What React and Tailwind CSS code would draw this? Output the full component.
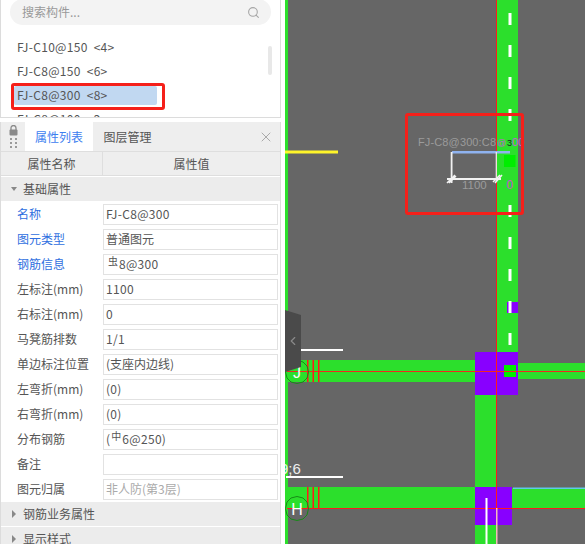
import React from "react";
import { ChevronLeft, Search, X } from "lucide-react";

const font = { fontFamily: '"Noto Sans CJK SC", "Liberation Sans", sans-serif' };

const rows = [
  ["名称", "FJ-C8@300", true, "latin"],
  ["图元类型", "普通图元", true],
  ["钢筋信息", "8@300", true, "rebar"],
  ["左标注(mm)", "1100", false, "latin"],
  ["右标注(mm)", "0", false, "latin"],
  ["马凳筋排数", "1/1", false, "latin"],
  ["单边标注位置", "(支座内边线)"],
  ["左弯折(mm)", "(0)", false, "latin"],
  ["右弯折(mm)", "(0)", false, "latin"],
  ["分布钢筋", "6@250)", false, "dist"],
  ["备注", ""],
  ["图元归属", "非人防(第3层)", false, "muted"],
];

function Row({ name, value, blue, kind }) {
  return (
    <div className="flex h-[25px] shrink-0 items-center">
      <div className={`w-[102px] pb-[2px] pl-[16px] text-[12px] ${blue ? "text-[#2f6fe0]" : "text-[#555]"}`}>{name}</div>
      <div className={`flex h-[21px] w-[175px] items-center border border-[#e2e2e2] bg-white pb-[2px] pl-[2px] text-[12px] ${kind === "muted" ? "text-[#aaa]" : "text-[#555]"}`}>
        {kind === "rebar" && (
          <span className="relative -top-[3px] ml-[2px] mr-[1px] text-[10px] leading-none">虫</span>
        )}
        {kind === "dist" && (
          <>
            <span className="tracking-[0.3px]">(</span>
            <span className="relative -top-[3px] mx-[1px] text-[10px] leading-none">中</span>
          </>
        )}
        {kind === "latin" || kind === "rebar" || kind === "dist" ? (
          <span className="tracking-[0.3px]">{value}</span>
        ) : value}
      </div>
    </div>
  );
}

function Group({ open, label }) {
  return (
    <div className="flex h-[24px] shrink-0 items-center bg-[#ececec]">
      <span className="flex w-[22px] shrink-0 pl-[10px]">
        <span className={`h-0 w-0 ${open
          ? "border-x-[3px] border-t-[4px] border-x-transparent border-t-[#888]"
          : "ml-[1px] border-y-[4px] border-l-[4px] border-y-transparent border-l-[#888]"}`} />
      </span>
      <span className="text-[12px] text-[#555]">{label}</span>
    </div>
  );
}

function Canvas() {
  const dashes = [13, 45, 77, 109, 205, 237, 269, 301, 333];
  const latin = "Liberation Sans";
  return (
    <svg className="h-full w-full" viewBox="285 0 300 544" xmlns="http://www.w3.org/2000/svg">
      <rect x="285" y="0" width="300" height="544" fill="#666666" />
      {/* Left green edge */}
      <rect x="285" y="0" width="3" height="544" fill="#2cdf2c" />
      {/* Vertical beam */}
      <rect x="497" y="0" width="21" height="352" fill="#2cdf2c" />
      <rect x="475" y="395" width="21" height="92" fill="#2cdf2c" />
      <rect x="475" y="525" width="21" height="19" fill="#2cdf2c" />
      {/* Horizontal beams */}
      <rect x="287" y="360" width="188" height="22" fill="#2cdf2c" />
      <rect x="518" y="363" width="67" height="16" fill="#2cdf2c" />
      <rect x="287" y="487" width="188" height="22" fill="#2cdf2c" />
      <rect x="512" y="488" width="73" height="21" fill="#2cdf2c" />
      <rect x="513" y="487.5" width="72" height="1.5" fill="#5fc8e8" />
      {/* Columns */}
      <rect x="475" y="352" width="43" height="43" fill="#8800ff" />
      <rect x="475" y="487" width="37" height="38" fill="#8800ff" />
      <rect x="507" y="302" width="11" height="11" fill="#8800ff" />
      <rect x="504" y="365" width="12" height="12" fill="#00ee00" />
      {/* Dashes */}
      {dashes.map((y) => (
        <rect key={y} x="508.5" y={y} width="3" height="12" fill="#ffffff" />
      ))}
      {/* Red axes */}
      <rect x="496" y="0" width="1" height="544" fill="#ff1a1a" />
      <rect x="287" y="371" width="298" height="1" fill="#f02a1e" />
      <rect x="287" y="508" width="298" height="1" fill="#ff1a1a" />
      {[307, 312.5, 318].map((x) => (
        <rect key={x} x={x} y="360" width="1.5" height="22" fill="#ff1a1a" />
      ))}
      {[307, 312.5, 318].map((x) => (
        <rect key={x} x={x} y="487" width="1.5" height="21" fill="#ff1a1a" />
      ))}
      {/* Yellow and white lines */}
      <rect x="285" y="150.5" width="53" height="3" fill="#fff52a" />
      <rect x="286" y="349" width="57" height="2" fill="#ffffff" />
      <rect x="286" y="476" width="57" height="2" fill="#ffffff" />
      <rect x="485.5" y="498" width="2" height="46" fill="#ffffff" />
      <rect x="496" y="508" width="1.5" height="36" fill="#f4b9b9" />
      {/* Axis bubbles */}
      <polygon points="297,360 303,362 307,366 308.5,372 307,378 303,382 297,383.5 291,382 287,378 285.5,372 287,366 291,362" fill="none" stroke="#178a17" />
      <text x="297" y="378" fill="#fff" fontSize="16" textAnchor="middle" fontFamily={latin}>J</text>
      <polygon points="297,496.5 303,498 307,502 308.5,508.5 307,515 303,519 297,520.5 291,519 287,515 285.5,508.5 287,502 291,498" fill="none" stroke="#178a17" />
      <text x="297" y="515" fill="#fff" fontSize="16" textAnchor="middle" fontFamily={latin}>H</text>
      <text x="280" y="474" fill="#eee" fontSize="15" fontFamily={latin}>9;6</text>
      {/* Annotation */}
      <text x="418" y="146" fill="#9b9b9b" fontSize="11" textLength="78" fontFamily={latin}>FJ-C8@300:C8</text>
      <text x="497" y="146" fill="#c858d8" fontSize="9" fontFamily={latin}>@</text>
      <text x="507" y="146" fill="#222" fontSize="9" fontFamily={latin}>3</text>
      <text x="512" y="146" fill="#c858d8" fontSize="11" fontFamily={latin}>00</text>
      <rect x="452" y="151" width="58" height="2.5" fill="#8fb3f0" />
      <rect x="450.7" y="152" width="1.8" height="31" fill="#f2f2f2" />
      <rect x="495.7" y="152" width="1.2" height="30" fill="#f2f2f2" />
      <rect x="447" y="178" width="54" height="2" fill="#f2f2f2" />
      <path d="M447 183 L455 175 M449 183 L456 176 M495 183 L502 175 M493 182 L500 175" stroke="#f2f2f2" strokeWidth="1.5" />
      <rect x="504" y="155" width="11.5" height="12" fill="#00ee00" />
      <text x="462" y="189" fill="#9b9b9b" fontSize="11.5" fontFamily={latin}>1100</text>
      <text x="506.5" y="189" fill="#d050d0" fontSize="12" fontFamily={latin}>0</text>
    </svg>
  );
}

export default function App() {
  return (
    <div className="flex h-[544px] w-[585px] overflow-hidden bg-white" style={font}>
      <div className="flex w-[281px] shrink-0 flex-col bg-white">
        <div className="flex h-[118px] shrink-0 flex-col overflow-hidden border-b border-r border-l border-[#dcdcdc] pl-[9px] pr-[9px]">
          <div className="mt-[-1px] flex h-[26px] w-[261px] shrink-0 items-center justify-between rounded-full bg-[#f3f3f3] pl-[12px] pr-[11px]">
            <span className="text-[12px] text-[#999]">搜索构件...</span>
            <Search size={13} className="text-[#a5a5a5]" />
          </div>
          <div className="relative mt-[10px] flex flex-col">
            <div className="absolute right-[-1px] top-[11px] h-[29px] w-[4px] rounded-full bg-[#e8e8e8]" />
            {["FJ-C10@150  <4>", "FJ-C8@150  <6>"].map((t) => (
              <div key={t} className="flex h-[24px] items-center whitespace-pre pb-[1px] pl-[7px] text-[12px] tracking-[0.3px] text-[#555]">{t}</div>
            ))}
            <div className="relative flex h-[24px] items-center whitespace-pre pb-[1px] pl-[7px] text-[12px] tracking-[0.3px] text-[#555]">
              <div className="absolute left-[4px] top-[3px] h-[19px] w-[143px] rounded-[2px] bg-[#c1d8f1]" />
              <span className="relative">FJ-C8@300  &lt;8&gt;</span>
              <div className="absolute left-[1px] top-0 h-[27px] w-[154px] rounded-[3px] border-[3px] border-[#f5201a]" />
            </div>
            <div className="flex h-[24px] items-center whitespace-pre pb-[1px] pl-[7px] text-[12px] tracking-[0.3px] text-[#555]">FJ-C8@100  &lt;2&gt;</div>
          </div>
        </div>
        <div className="mt-[4px] flex min-h-0 flex-1 flex-col overflow-hidden border-l border-r border-[#dcdcdc]">
          <div className="flex h-[29px] shrink-0 items-stretch bg-[#eeeeee]">
            <div className="flex w-[24px] flex-col items-center justify-center gap-[2px]">
              <svg width="9" height="11" viewBox="0 0 9 11"><path d="M2 5V3a2.5 2.5 0 0 1 5 0v2" fill="none" stroke="#8a8a8a" strokeWidth="1.3" /><rect x="0.5" y="4.5" width="8" height="6" rx="1" fill="#8a8a8a" /></svg>
              <svg width="7" height="10" viewBox="0 0 7 10" fill="#9a9a9a"><rect x="0" y="0" width="2" height="2" /><rect x="5" y="0" width="2" height="2" /><rect x="0" y="4" width="2" height="2" /><rect x="5" y="4" width="2" height="2" /><rect x="0" y="8" width="2" height="2" /><rect x="5" y="8" width="2" height="2" /></svg>
            </div>
            <div className="flex w-[68px] items-center justify-center bg-white text-[12px] text-[#3d80f0]">属性列表</div>
            <div className="flex w-[69px] items-center justify-center text-[12px] text-[#555]">图层管理</div>
            <div className="ml-auto flex w-[29px] items-center justify-center text-[#aaa]"><X size={16} strokeWidth={1.5} /></div>
          </div>
          <div className="flex h-[25px] shrink-0 border-y border-[#dedede] bg-[#eeeeee] text-[12px] text-[#555]">
            <div className="flex w-[102px] items-center justify-center border-r border-[#dedede]">属性名称</div>
            <div className="flex flex-1 items-center justify-center">属性值</div>
          </div>
          <div className="mt-[1px]"><Group open label="基础属性" /></div>
          <div className="flex shrink-0 flex-col pt-[1px]">
            {rows.map(([n, v, b, k]) => <Row key={n} name={n} value={v} blue={b} kind={k} />)}
          </div>
          <div className="flex flex-col gap-[1px]">
            <Group label="钢筋业务属性" />
            <Group label="显示样式" />
          </div>
        </div>
      </div>
      <div className="w-[4px] shrink-0 bg-white" />
      <div className="relative h-full flex-1">
        <Canvas />
        <div className="absolute left-0 top-[310px] flex h-[62px] w-[16px] items-center justify-center bg-[#4a4a4a] [clip-path:polygon(0_0,100%_8%,100%_92%,0_100%)]">
          <ChevronLeft size={14} className="text-[#8a8a8a]" />
        </div>
        <div className="absolute left-[120px] top-[113px] h-[102px] w-[119px] rounded-[3px] border-[3px] border-[#f5201a]" />
      </div>
    </div>
  );
}
